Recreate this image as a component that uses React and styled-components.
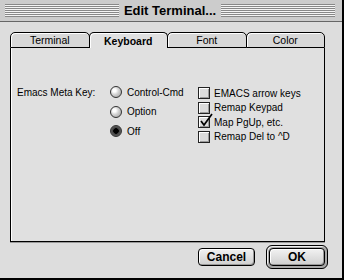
import styled, { createGlobalStyle } from "styled-components";

const GlobalStyle = createGlobalStyle`
  html, body {
    margin: 0;
    padding: 0;
    background: #dddddd;
  }
`;

const Window = styled.div`
  width: 344px;
  height: 280px;
  box-sizing: border-box;
  background: #dddddd;
  border-right: 2px solid #000;
  border-bottom: 2px solid #000;
  display: flex;
  flex-direction: column;
  font-family: "Liberation Sans", Arial, sans-serif;
  color: #000;
`;

const TitleBar = styled.div`
  height: 21px;
  flex: none;
  background: #cccccc;
  border-bottom: 1px solid #666;
  display: flex;
  align-items: center;
  gap: 5px;
  padding: 0 7px 0 5px;
`;

const Stripes = styled.div`
  flex: 1;
  height: 13px;
  background: repeating-linear-gradient(
    to bottom,
    #888 0 1px,
    #f4f4f4 1px 2px
  );
`;

const Title = styled.div`
  font-weight: bold;
  font-size: 13px;
  line-height: 16px;
  white-space: nowrap;
`;

const Body = styled.div`
  flex: 1;
  display: flex;
  flex-direction: column;
  padding: 10px 15px 9px 10px;
`;

const Tabs = styled.div`
  display: flex;
  height: 16px;
  width: 315px;
`;

const Tab = styled.div`
  flex: 1;
  box-sizing: border-box;
  border: 1px solid #000;
  border-bottom: ${(p) => (p.$active ? "none" : "1px solid #000")};
  border-radius: 5px 5px 0 0;
  background: ${(p) => (p.$active ? "#e0e0e0" : "#d8d8d8")};
  box-shadow: inset 1px 1px 0 #fff;
  margin-right: -1px;
  display: flex;
  align-items: center;
  justify-content: center;
  font-size: 10.5px;
  font-weight: ${(p) => (p.$active ? "bold" : "normal")};
  position: relative;
  z-index: ${(p) => (p.$active ? 1 : 0)};
  &:last-child {
    margin-right: 0;
  }
`;

const Panel = styled.div`
  width: 315px;
  height: 194px;
  box-sizing: border-box;
  border: 1px solid #000;
  border-top: none;
  background: #e0e0e0;
  box-shadow: inset 1px 0 0 #fff, 0 1px 0 #999;
  display: flex;
  padding: 37px 0 0 6px;
  font-size: 10px;
`;

const Label = styled.div`
  width: 93px;
  line-height: 14px;
  padding-top: 1px;
`;

const RadioGroup = styled.div`
  width: 88px;
  display: flex;
  flex-direction: column;
  gap: 5.5px;
`;

const Option = styled.div`
  display: flex;
  align-items: center;
  gap: ${(p) => p.$gap}px;
  height: ${(p) => p.$h}px;
`;

const Radio = styled.span`
  width: 12px;
  height: 12px;
  box-sizing: border-box;
  border-radius: 50%;
  border: 1px solid #333;
  background: ${(p) =>
    p.$on
      ? "radial-gradient(circle at 50% 50%, #000 0 2.5px, #444 3px, #777 100%)"
      : "radial-gradient(circle at 35% 35%, #fff 0 1.5px, #d4d4d4 4px, #9a9a9a 100%)"};
`;

const CheckGroup = styled.div`
  display: flex;
  flex-direction: column;
  gap: 2.5px;
  padding-top: 2px;
`;

const Box = styled.span`
  width: 12px;
  height: 12px;
  box-sizing: border-box;
  border: 1px solid #222;
  background: #dcdcdc;
  box-shadow: inset 1px 1px 0 #fff, inset -1px -1px 0 #9a9a9a;
  position: relative;
  flex: none;
`;

const Tick = styled.svg`
  position: absolute;
  left: 0;
  top: -4px;
  overflow: visible;
`;

const Buttons = styled.div`
  display: flex;
  justify-content: flex-end;
  align-items: center;
  gap: 11px;
  margin-top: 3px;
  margin-right: -1px;
`;

const Button = styled.div`
  width: ${(p) => p.$w}px;
  height: 18px;
  box-sizing: border-box;
  border: 1px solid #000;
  border-radius: 4px;
  background: linear-gradient(#f2f2f2, #cfcfcf);
  box-shadow: inset 1px 1px 0 #fff, inset -1px -1px 0 #999;
  display: flex;
  align-items: center;
  justify-content: center;
  font-weight: bold;
  font-size: 12px;
`;

const DefaultRing = styled.div`
  border: 1px solid #000;
  border-radius: 6px;
  padding: 2px;
  background: #a8a8a8;
  box-shadow: inset 1px 1px 0 #eee;
`;

const radios = [
  { label: "Control-Cmd", on: false },
  { label: "Option", on: false },
  { label: "Off", on: true },
];

const checks = [
  { label: "EMACS arrow keys", on: false },
  { label: "Remap Keypad", on: false },
  { label: "Map PgUp, etc.", on: true },
  { label: "Remap Del to ^D", on: false },
];

export default function App() {
  return (
    <>
      <GlobalStyle />
      <Window>
        <TitleBar>
          <Stripes />
          <Title>Edit Terminal...</Title>
          <Stripes />
        </TitleBar>
        <Body>
          <Tabs>
            <Tab>Terminal</Tab>
            <Tab $active>Keyboard</Tab>
            <Tab>Font</Tab>
            <Tab>Color</Tab>
          </Tabs>
          <Panel>
            <Label>Emacs Meta Key:</Label>
            <RadioGroup>
              {radios.map((r) => (
                <Option key={r.label} $gap={5} $h={14}>
                  <Radio $on={r.on} />
                  <span>{r.label}</span>
                </Option>
              ))}
            </RadioGroup>
            <CheckGroup>
              {checks.map((c) => (
                <Option key={c.label} $gap={4} $h={12}>
                  <Box>
                    {c.on && (
                      <Tick width="14" height="14" viewBox="0 0 14 14">
                        <polyline
                          points="2,8 5,12 13,1"
                          fill="none"
                          stroke="#000"
                          strokeWidth="1.7"
                        />
                      </Tick>
                    )}
                  </Box>
                  <span>{c.label}</span>
                </Option>
              ))}
            </CheckGroup>
          </Panel>
          <Buttons>
            <Button $w={57}>Cancel</Button>
            <DefaultRing>
              <Button $w={56}>OK</Button>
            </DefaultRing>
          </Buttons>
        </Body>
      </Window>
    </>
  );
}
